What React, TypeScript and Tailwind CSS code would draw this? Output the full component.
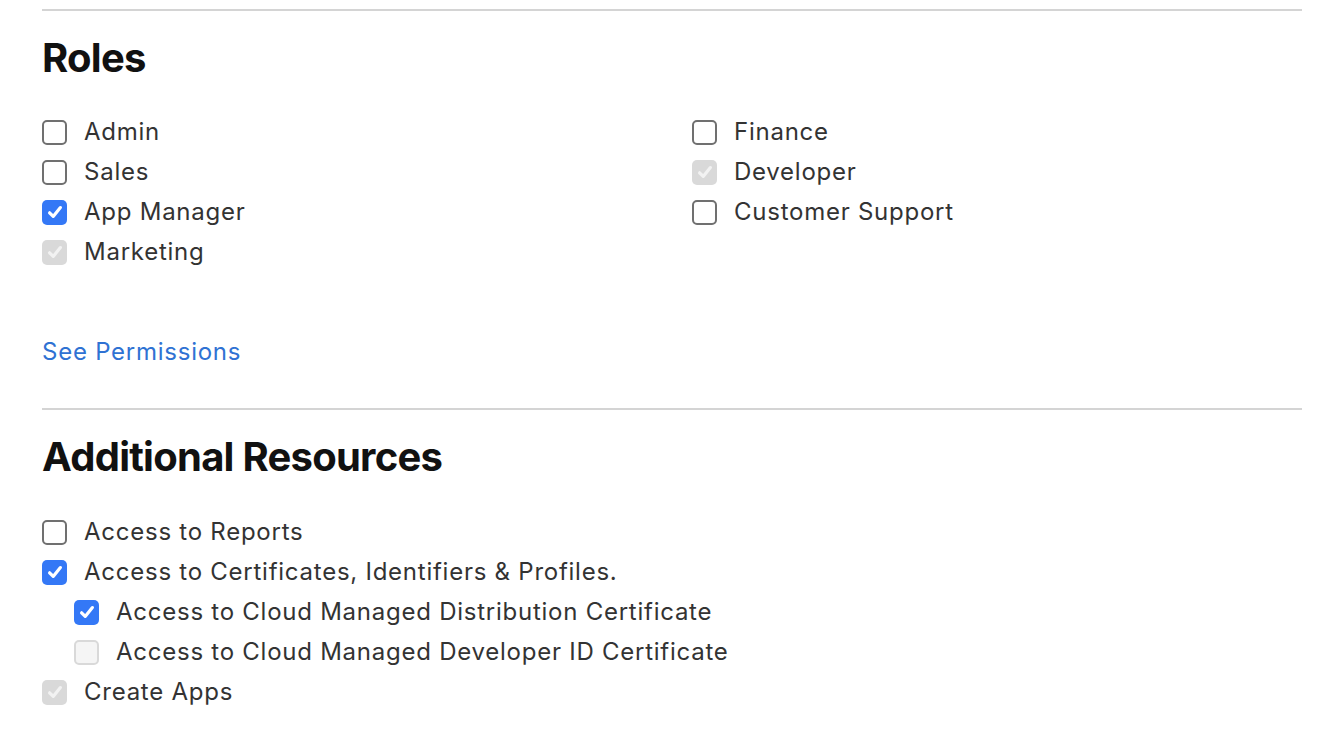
import type { ReactNode } from "react";

type BoxState = "off" | "on" | "lockedOn" | "lockedOff";

function CheckBox({ state }: { state: BoxState }) {
  const base = "w-[25px] h-[25px] rounded-[5px] flex items-center justify-center shrink-0";
  if (state === "on") {
    return (
      <div className={`${base} bg-[#3478f6]`}>
        <CheckMark color="#ffffff" />
      </div>
    );
  }
  if (state === "lockedOn") {
    return (
      <div className={`${base} bg-[#d9d9d9]`}>
        <CheckMark color="#f2f2f2" />
      </div>
    );
  }
  if (state === "lockedOff") {
    return <div className={`${base} bg-[#f5f5f5] border-2 border-[#d9d9d9]`} />;
  }
  return <div className={`${base} bg-white border-2 border-[#707070]`} />;
}

function CheckMark({ color }: { color: string }) {
  return (
    <svg width="18" height="18" viewBox="0 0 18 18" fill="none">
      <path
        d="M3.6 9.8 L7.2 13.4 L14.4 4.6"
        stroke={color}
        strokeWidth="3.2"
        strokeLinecap="round"
        strokeLinejoin="round"
      />
    </svg>
  );
}

function Row({ state, children, indent }: { state: BoxState; children: ReactNode; indent?: boolean }) {
  return (
    <div className={`h-10 flex items-center gap-[17px] ${indent ? "pl-8" : ""}`}>
      <CheckBox state={state} />
      <span className="text-[24px] text-[#333333] tracking-[0.75px]">{children}</span>
    </div>
  );
}

function Divider() {
  return <div className="h-[2px] bg-[#d4d4d4]" />;
}

export default function App() {
  return (
    <div
      className="bg-white w-[1322px] h-[754px] pt-[9px] pl-[42px] pr-[20px]"
      style={{ fontFamily: "Inter, 'Noto Sans', sans-serif" }}
    >
      <Divider />
      <h2 className="mt-[23px] text-[40px] leading-[48px] font-bold text-[#111111] tracking-[-0.75px]">Roles</h2>
      <div className="mt-[30px] grid grid-cols-[650px_1fr]">
        <div>
          <Row state="off">Admin</Row>
          <Row state="off">Sales</Row>
          <Row state="on">App Manager</Row>
          <Row state="lockedOn">Marketing</Row>
        </div>
        <div>
          <Row state="off">Finance</Row>
          <Row state="lockedOn">Developer</Row>
          <Row state="off">Customer Support</Row>
        </div>
      </div>
      <div className="mt-[60px] h-10 flex items-center">
        <a href="#" className="text-[24px] text-[#2f72d3] tracking-[0.75px]">
          See Permissions
        </a>
      </div>
      <div className="mt-[36px]">
        <Divider />
      </div>
      <h2 className="mt-[23px] text-[40px] leading-[48px] font-bold text-[#111111] tracking-[-0.75px]">
        Additional Resources
      </h2>
      <div className="mt-[31px]">
        <Row state="off">Access to Reports</Row>
        <Row state="on">Access to Certificates, Identifiers &amp; Profiles.</Row>
        <Row state="on" indent>
          Access to Cloud Managed Distribution Certificate
        </Row>
        <Row state="lockedOff" indent>
          Access to Cloud Managed Developer ID Certificate
        </Row>
        <Row state="lockedOn">Create Apps</Row>
      </div>
    </div>
  );
}
